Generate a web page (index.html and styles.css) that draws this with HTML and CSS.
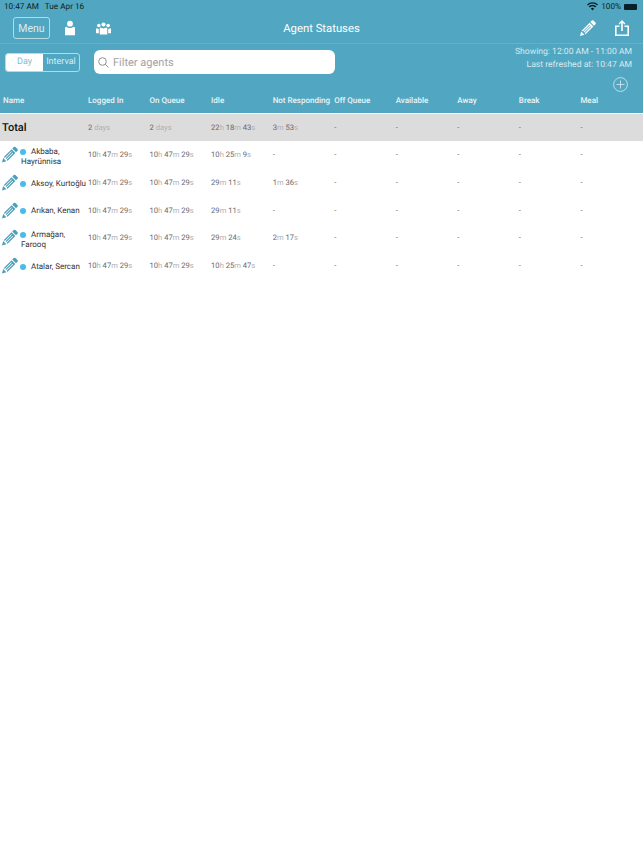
FILE: index.html
```html
<!DOCTYPE html>
<html lang="en">
<head>
    <meta charset="UTF-8">
    <title>Agent Statuses</title>
    <link rel="stylesheet" href="styles.css">
</head>
<body>
    <svg class="defs" width="0" height="0">
        <symbol id="pencil" viewBox="0 0 24 24">
            <path d="M17.600.8a1.800 1.800 0 0 1 2.500 0l3.100 3.100a1.800 1.800 0 0 1 0 2.500L21 8.600 15.400 3zM14.400 4l5.600 5.600L8 21.600 7.400 19.500 16.800 10 16 9.200 6.500 18.700 5.300 17.500 14.800 8 14 7.200 4.500 16.700 2.400 16zM1.800 17.400l4.800 4.800L0 24z"/>
        </symbol>
    </svg>
    <header class="top">
        <div class="status-bar">
            <span>10:47 AM&nbsp;&nbsp; Tue Apr 16</span>
            <span class="status-right">
                <svg width="11" height="9" viewBox="0 0 22 16"><path d="M11 16 7.600 12.200a5 5 0 0 1 6.800 0zM5.600 10 3.400 7.600a11 11 0 0 1 15.200 0L16.400 10a8 8 0 0 0-10.800 0zM1.800 5.800 0 3.800a16 16 0 0 1 22 0l-1.800 2a13.400 13.400 0 0 0-18.400 0z"/></svg>
                <span>100%</span>
                <span class="battery"></span>
            </span>
        </div>
        <nav class="nav-bar">
            <div class="nav-left">
                <button class="menu-btn">Menu</button>
                <svg class="agent-icon" width="10" height="16" viewBox="0 0 11 16"><circle cx="5.500" cy="3.200" r="3.200"/><path d="M1.500 6.500c1 1 2.500 1.500 4 1.500s3-.5 4-1.500l1.500 1V16H0V7.500z"/></svg>
                <svg class="group-icon" width="15" height="13" viewBox="0 0 16 13"><circle cx="8" cy="2.200" r="2.200"/><circle cx="3" cy="3.200" r="1.900"/><circle cx="13" cy="3.200" r="1.900"/><path d="M4.800 5.500 8 6.500l3.200-1 .8.500v7H4V6zM0 6.200l3 .7v4.600H0zM16 6.200l-3 .7v4.600h3z"/></svg>
            </div>
            <h1 class="nav-title">Agent Statuses</h1>
            <div class="nav-right">
                <svg class="edit-icon" width="16" height="16"><use href="#pencil"/></svg>
                <svg class="share-icon" width="14" height="16" viewBox="0 0 14 16"><path d="M7 0l3.400 3.400-1 1L7.800 2.800V11H6.200V2.800L4.600 4.400l-1-1z"/><path d="M0 5.500h4.500v1.600H1.600v7.300h10.800V7.100H9.500V5.500H14V16H0z"/></svg>
            </div>
        </nav>
        <div class="toolbar">
            <div class="segments">
                <span class="segment active">Day</span>
                <span class="segment">Interval</span>
            </div>
            <div class="search">
                <svg width="11" height="11" viewBox="0 0 11 11"><circle cx="4.500" cy="4.500" r="3.800"/><path d="M7.300 7.300 10.500 10.500"/></svg>
                <span>Filter agents</span>
            </div>
            <div class="times">
                <div>Showing: 12:00 AM - 11:00 AM</div>
                <div>Last refreshed at: 10:47 AM</div>
                <svg class="add-icon" width="15" height="15" viewBox="0 0 15 15"><circle cx="7.500" cy="7.500" r="6.900"/><path d="M7.500 3.500v8M3.500 7.500h8"/></svg>
            </div>
        </div>
        <div class="row head-row">
            <span>Name</span><span>Logged In</span><span>On Queue</span><span>Idle</span><span>Not Responding</span><span>Off Queue</span><span>Available</span><span>Away</span><span>Break</span><span>Meal</span>
        </div>
    </header>
    <main>
        <div class="row total-row">
            <span class="total-name">Total</span>
            <span class="t">2 <i>days</i></span>
            <span class="t">2 <i>days</i></span>
            <span class="t">22<i>h</i> 18<i>m</i> 43<i>s</i></span>
            <span class="t">3<i>m</i> 53<i>s</i></span>
            <span class="t">-</span><span class="t">-</span><span class="t">-</span><span class="t">-</span><span class="t">-</span>
        </div>
        <div class="row agent-row">
            <div class="agent wrap"><svg class="row-pencil" width="16" height="17"><use href="#pencil"/></svg><b class="dot"></b><span class="agent-name">Akbaba, Hayrünnisa</span></div>
            <span class="t">10<i>h</i> 47<i>m</i> 29<i>s</i></span>
            <span class="t">10<i>h</i> 47<i>m</i> 29<i>s</i></span>
            <span class="t">10<i>h</i> 25<i>m</i> 9<i>s</i></span>
            <span class="t">-</span><span class="t">-</span><span class="t">-</span><span class="t">-</span><span class="t">-</span><span class="t">-</span>
        </div>
        <div class="row agent-row">
            <div class="agent"><svg class="row-pencil" width="16" height="17"><use href="#pencil"/></svg><b class="dot"></b><span class="agent-name">Aksoy, Kurtoğlu</span></div>
            <span class="t">10<i>h</i> 47<i>m</i> 29<i>s</i></span>
            <span class="t">10<i>h</i> 47<i>m</i> 29<i>s</i></span>
            <span class="t">29<i>m</i> 11<i>s</i></span>
            <span class="t">1<i>m</i> 36<i>s</i></span>
            <span class="t">-</span><span class="t">-</span><span class="t">-</span><span class="t">-</span><span class="t">-</span>
        </div>
        <div class="row agent-row">
            <div class="agent"><svg class="row-pencil" width="16" height="17"><use href="#pencil"/></svg><b class="dot"></b><span class="agent-name">Arıkan, Kenan</span></div>
            <span class="t">10<i>h</i> 47<i>m</i> 29<i>s</i></span>
            <span class="t">10<i>h</i> 47<i>m</i> 29<i>s</i></span>
            <span class="t">29<i>m</i> 11<i>s</i></span>
            <span class="t">-</span><span class="t">-</span><span class="t">-</span><span class="t">-</span><span class="t">-</span><span class="t">-</span>
        </div>
        <div class="row agent-row">
            <div class="agent wrap"><svg class="row-pencil" width="16" height="17"><use href="#pencil"/></svg><b class="dot"></b><span class="agent-name">Armağan, Farooq</span></div>
            <span class="t">10<i>h</i> 47<i>m</i> 29<i>s</i></span>
            <span class="t">10<i>h</i> 47<i>m</i> 29<i>s</i></span>
            <span class="t">29<i>m</i> 24<i>s</i></span>
            <span class="t">2<i>m</i> 17<i>s</i></span>
            <span class="t">-</span><span class="t">-</span><span class="t">-</span><span class="t">-</span><span class="t">-</span>
        </div>
        <div class="row agent-row">
            <div class="agent"><svg class="row-pencil" width="16" height="17"><use href="#pencil"/></svg><b class="dot"></b><span class="agent-name">Atalar, Sercan</span></div>
            <span class="t">10<i>h</i> 47<i>m</i> 29<i>s</i></span>
            <span class="t">10<i>h</i> 47<i>m</i> 29<i>s</i></span>
            <span class="t">10<i>h</i> 25<i>m</i> 47<i>s</i></span>
            <span class="t">-</span><span class="t">-</span><span class="t">-</span><span class="t">-</span><span class="t">-</span><span class="t">-</span>
        </div>
    </main>
</body>
</html>
```
FILE: styles.css
```css
body {
    font-family: "Roboto", "Liberation Sans", sans-serif;
    background-color: #fff;
    margin: 0;
    overflow: hidden;
    text-rendering: geometricPrecision;
}
.defs {
    display: block;
    height: 0;
}
.top {
    background-color: #51a7c1;
    color: #fff;
    height: 113px;
    display: flex;
    flex-direction: column;
    margin-bottom: 1px;
}
.status-bar {
    height: 13px;
    padding: 0 6px 0 4px;
    display: flex;
    justify-content: space-between;
    align-items: center;
    font-size: 8.200px;
    color: #0b1f27;
}
.status-right {
    display: flex;
    align-items: center;
    gap: 3px;
}
.status-right svg {
    fill: #0b1f27;
}
.battery {
    width: 13px;
    height: 6px;
    background-color: #0b1f27;
    border-radius: 1px;
}
.nav-bar {
    height: 31px;
    box-sizing: border-box;
    border-bottom: 1px solid #62b2ca;
    position: relative;
    display: flex;
    justify-content: space-between;
    align-items: center;
    padding: 0 14px 0 13px;
}
.nav-left, .nav-right {
    display: flex;
    align-items: center;
}
.nav-title {
    position: absolute;
    left: 0;
    right: 0;
    top: 8px;
    margin: 0;
    font-size: 11.300px;
    line-height: 16px;
    font-weight: 400;
    text-align: center;
}
.menu-btn {
    width: 37px;
    height: 22px;
    padding: 0;
    background: none;
    border: 1px solid #b5dae5;
    border-radius: 3px;
    color: #d9edf3;
    font-family: inherit;
    font-size: 10.500px;
}
.agent-icon {
    fill: #fff;
    margin-left: 15px;
}
.group-icon {
    fill: #fff;
    margin-left: 21px;
}
.edit-icon {
    fill: #fff;
}
.share-icon {
    fill: #fff;
    margin-left: 19px;
}
.toolbar {
    display: flex;
    padding: 2px 11px 0 5px;
    height: 51px;
    box-sizing: border-box;
    align-items: flex-start;
}
.segments {
    display: flex;
    width: 75px;
    height: 19px;
    margin-top: 7px;
    box-sizing: border-box;
    border: 1px solid #b5dae5;
    border-radius: 3px;
    overflow: hidden;
    font-size: 9px;
}
.segment {
    flex: 1;
    line-height: 17px;
    text-align: center;
    color: #d9edf3;
}
.segment.active {
    flex: 0 0 37px;
    background-color: #fff;
    color: #7fbdd1;
}
.search {
    width: 241px;
    height: 24px;
    margin: 4px 0 0 14px;
    background-color: #fff;
    border-radius: 6px;
    display: flex;
    align-items: center;
    gap: 4px;
    padding-left: 4px;
    box-sizing: border-box;
    color: #a2a2a6;
    font-size: 11px;
}
.search svg {
    fill: none;
    stroke: #909094;
    stroke-width: 1;
}
.times {
    margin-left: auto;
    text-align: right;
    font-size: 8.600px;
    line-height: 12.500px;
    color: #d5ebf2;
}
.add-icon {
    display: block;
    margin: 6px 4px 0 auto;
    fill: none;
    stroke: #d5ebf2;
    stroke-width: 0.800;
}
.row {
    display: grid;
    grid-template-columns: 88px repeat(9, 61.560px);
    align-items: center;
}
.head-row {
    font-size: 8px;
    font-weight: 500;
    color: #e8f4f8;
    height: 10px;
    padding-left: 3px;
    grid-template-columns: 85px repeat(9, 61.560px);
}
.total-row {
    background-color: #dcdcdc;
    height: 27px;
}
.total-name {
    font-size: 11px;
    font-weight: 500;
    color: #111;
    padding-left: 2px;
}
.agent-row {
    height: 27.700px;
}
.t {
    font-size: 7.600px;
    color: #6a6a6e;
    white-space: nowrap;
}
.t i {
    font-style: normal;
    color: #b0b0b4;
}
.agent {
    display: flex;
    align-items: center;
    height: 100%;
    padding-left: 2px;
    font-size: 8px;
    line-height: 10px;
    color: #333;
    white-space: nowrap;
}
.row-pencil {
    fill: #4c9fba;
    flex: none;
}
.dot {
    flex: none;
    width: 6px;
    height: 6px;
    margin: 2px 5px 0 2px;
    border-radius: 50%;
    background-color: #48bdea;
}
.agent.wrap {
    white-space: normal;
}
.agent.wrap .dot {
    margin: 0 5px 6px 2px;
}
.agent.wrap .agent-name {
    text-indent: 10px;
    margin-left: -10px;
    padding-top: 4px;
}
.agent:not(.wrap) .agent-name {
    padding-top: 2px;
}
```
